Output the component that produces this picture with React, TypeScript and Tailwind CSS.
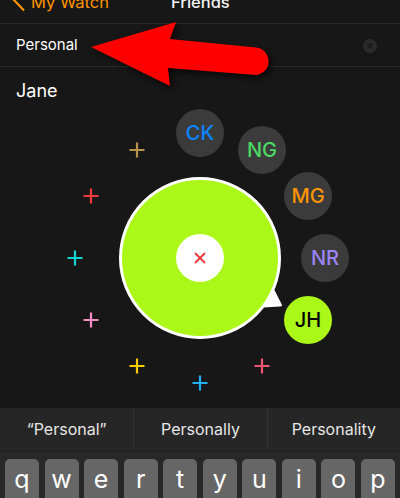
const font = { fontFamily: '"Inter", "Liberation Sans", sans-serif' };

const friends = [
  { id: "CK", x: 200, y: 133, color: "text-[#0a84ff]" },
  { id: "NG", x: 262, y: 150, color: "text-[#4cd964]" },
  { id: "MG", x: 308, y: 196, color: "text-[#ff9500]" },
  { id: "NR", x: 325, y: 258, color: "text-[#9d85f5]" },
];

const plusses = [
  { x: 137, y: 150, color: "#b8934f" },
  { x: 91, y: 196, color: "#f2393c" },
  { x: 75, y: 258, color: "#12d6d6" },
  { x: 91, y: 320, color: "#f58fc4" },
  { x: 137, y: 366, color: "#ffcc00" },
  { x: 200, y: 383, color: "#1fb0f5" },
  { x: 262, y: 366, color: "#f0566e" },
];

const suggestions = ["“Personal”", "Personally", "Personality"];
const keys = ["q", "w", "e", "r", "t", "y", "u", "i", "o", "p"];

const Plus = ({ x, y, color }: { x: number; y: number; color: string }) => (
  <svg
    className="absolute"
    width="16"
    height="16"
    viewBox="0 0 16 16"
    style={{ left: x - 8, top: y - 8 }}
  >
    <path d="M8 0.5V15.5M0.5 8H15.5" stroke={color} strokeWidth="2.2" />
  </svg>
);

const App = () => {
  return (
    <div
      className="relative flex flex-col w-[400px] h-[498px] overflow-hidden bg-[#171717] text-white"
      style={font}
    >
      <div className="flex items-end shrink-0 h-[24px] pl-[12px] pb-[11px] border-b border-b-[#2c2c2c] text-[16.5px] leading-[20px]">
        <svg className="mr-[6px] shrink-0" width="13" height="14" viewBox="0 0 13 14">
          <path d="M12 -8L2 2L12 12.5" stroke="#ff9500" strokeWidth="2.2" fill="none" />
        </svg>
        <span className="w-[140px] text-[#ff9500]">My Watch</span>
        <span className="font-medium text-[#f2f2f2]">Friends</span>
      </div>

      <div className="flex items-center justify-between shrink-0 h-[43px] pl-4 pr-[23px] pt-[1px] border-b border-b-[#2c2c2c] text-[15px]">
        Personal
        <div className="flex items-center justify-center w-3.5 h-3.5 rounded-full bg-[#2a2a2a]">
          <svg width="8" height="8" viewBox="0 0 8 8">
            <path d="M1.5 1.5L6.5 6.5M6.5 1.5L1.5 6.5" stroke="#171717" strokeWidth="1.2" />
          </svg>
        </div>
      </div>

      <div className="flex-1 px-4 pt-[12px] text-[18px] leading-[24px]">Jane</div>

      <svg className="absolute left-[258px] top-[286px]" width="26" height="24" viewBox="0 0 26 24">
        <path d="M16.5 4L24 19Q24.5 20.6 22 20.4L5 21.5L5 10Z" fill="#fff" />
      </svg>
      <div className="absolute left-[119px] top-[177px] w-[162px] h-[162px] rounded-full border-[3px] border-white bg-[#aaf718] flex items-center justify-center">
        <div className="flex items-center justify-center w-12 h-12 rounded-full bg-white">
          <svg width="12" height="12" viewBox="0 0 12 12">
            <path d="M1 1L11 11M11 1L1 11" stroke="#f0353b" strokeWidth="1.8" />
          </svg>
        </div>
      </div>

      {friends.map((friend) => (
        <div
          key={friend.id}
          className={`absolute flex items-center justify-center w-12 h-12 rounded-full bg-[#3b3b3b] text-[20px] font-medium ${friend.color}`}
          style={{ left: friend.x - 24, top: friend.y - 24 }}
        >
          {friend.id}
        </div>
      ))}
      <div className="absolute left-[284px] top-[296px] flex items-center justify-center w-12 h-12 rounded-full bg-[#aaf718] text-[20px] font-medium text-black">
        JH
      </div>

      {plusses.map((plus) => (
        <Plus key={plus.x + "-" + plus.y} {...plus} />
      ))}

      <div className="flex flex-col shrink-0 h-[90px] bg-[#282828]">
        <div className="grid grid-cols-3 shrink-0 h-[44px] pb-[2px] border-b border-b-[#1f1f1f] bg-[#262626]">
          {suggestions.map((word, index) => (
            <div
              key={word}
              className={`flex items-center justify-center text-[16px] text-[#e6e6e6] ${
                index > 0 ? "border-l border-l-[#333333]" : ""
              }`}
            >
              {word}
            </div>
          ))}
        </div>
        <div className="flex gap-[5.5px] px-[5px] pt-[7px]">
          {keys.map((key) => (
            <div
              key={key}
              className="flex flex-1 justify-center h-[60px] pt-[5px] rounded-[5px] bg-[#666666] text-[25px] leading-[30px] text-white"
            >
              {key}
            </div>
          ))}
        </div>
      </div>

      <svg
        className="absolute left-0 top-0 drop-shadow-[3px_3px_3px_rgba(0,0,0,0.7)]"
        width="400"
        height="100"
        viewBox="0 0 400 100"
      >
        <path
          d="M91 47L176 22L170 39L256 47.5A13.8 13.8 0 0 1 256 75L168 68L170 86Z"
          fill="#fe0000"
        />
      </svg>
    </div>
  );
};

export default App;
